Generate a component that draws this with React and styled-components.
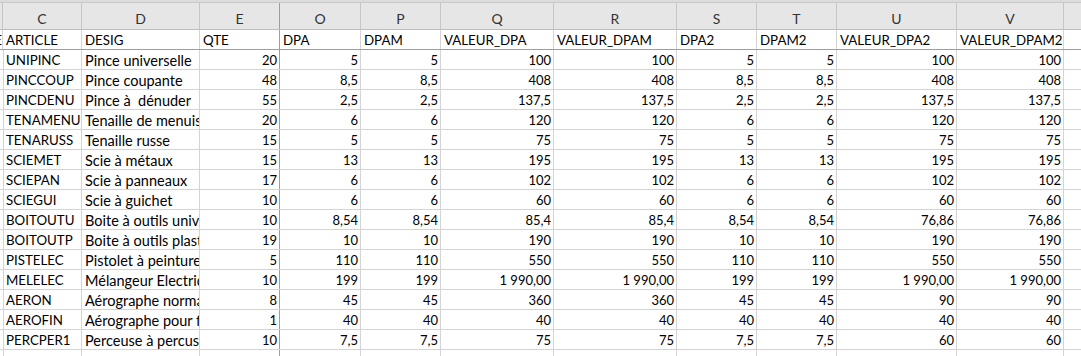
import React from "react";
import styled, { createGlobalStyle } from "styled-components";

const GlobalStyle = createGlobalStyle`
  html, body {
    margin: 0;
    padding: 0;
    background: #ffffff;
    overflow: hidden;
  }
`;

const COLS = [
  { letter: "", width: 3 },
  { letter: "C", width: 79 },
  { letter: "D", width: 118 },
  { letter: "E", width: 80, freeze: true },
  { letter: "O", width: 81 },
  { letter: "P", width: 80 },
  { letter: "Q", width: 113 },
  { letter: "R", width: 123 },
  { letter: "S", width: 80 },
  { letter: "T", width: 80 },
  { letter: "U", width: 120 },
  { letter: "V", width: 107 },
  { letter: "", width: 40 }
];

const HEAD = ["ARTICLE", "DESIG", "QTE", "DPA", "DPAM", "VALEUR_DPA", "VALEUR_DPAM", "DPA2", "DPAM2", "VALEUR_DPA2", "VALEUR_DPAM2"];

const ROWS = [
  ["UNIPINC", "Pince universelle", "20", "5", "5", "100", "100", "5", "5", "100", "100"],
  ["PINCCOUP", "Pince coupante", "48", "8,5", "8,5", "408", "408", "8,5", "8,5", "408", "408"],
  ["PINCDENU", "Pince à  dénuder", "55", "2,5", "2,5", "137,5", "137,5", "2,5", "2,5", "137,5", "137,5"],
  ["TENAMENU", "Tenaille de menuisier", "20", "6", "6", "120", "120", "6", "6", "120", "120"],
  ["TENARUSS", "Tenaille russe", "15", "5", "5", "75", "75", "5", "5", "75", "75"],
  ["SCIEMET", "Scie à métaux", "15", "13", "13", "195", "195", "13", "13", "195", "195"],
  ["SCIEPAN", "Scie à panneaux", "17", "6", "6", "102", "102", "6", "6", "102", "102"],
  ["SCIEGUI", "Scie à guichet", "10", "6", "6", "60", "60", "6", "6", "60", "60"],
  ["BOITOUTU", "Boite à outils universelle", "10", "8,54", "8,54", "85,4", "85,4", "8,54", "8,54", "76,86", "76,86"],
  ["BOITOUTP", "Boite à outils plastique", "19", "10", "10", "190", "190", "10", "10", "190", "190"],
  ["PISTELEC", "Pistolet à peinture électrique", "5", "110", "110", "550", "550", "110", "110", "550", "550"],
  ["MELELEC", "Mélangeur Electrique", "10", "199", "199", "1 990,00", "1 990,00", "199", "199", "1 990,00", "1 990,00"],
  ["AERON", "Aérographe normal", "8", "45", "45", "360", "360", "45", "45", "90", "90"],
  ["AEROFIN", "Aérographe pour finition", "1", "40", "40", "40", "40", "40", "40", "40", "40"],
  ["PERCPER1", "Perceuse à percussion", "10", "7,5", "7,5", "75", "75", "7,5", "7,5", "60", "60"]
];

const FONT = {
  caps: "font-size: 13.3px;",
  text: "font-size: 14.5px;",
  num: "font-size: 13px;"
};

const Sheet = styled.div`
  width: 1081px;
  height: 356px;
  overflow: hidden;
  font-family: Lato, "Liberation Sans", sans-serif;
  color: #000;
`;

const TopBand = styled.div`
  height: 2px;
  background: #dcdcdc;
  border-bottom: 1px solid #c8c8c8;
`;

const Row = styled.div`
  display: grid;
  grid-template-columns: ${COLS.map(c => c.width + "px").join(" ")};
  height: ${p => p.$h}px;
  box-sizing: border-box;
  border-bottom: 1px solid ${p => p.$line};
  background: ${p => p.$bg || "#fff"};
`;

const Letter = styled.div`
  box-sizing: border-box;
  border-right: 1px solid ${p => (p.$freeze ? "#9e9e9e" : "#c6c6c6")};
  display: flex;
  align-items: center;
  justify-content: center;
  padding-top: 5px;
  color: #333;
  font-size: 14px;
`;

const Cell = styled.div`
  box-sizing: border-box;
  border-right: 1px solid ${p => (p.$freeze ? "#9e9e9e" : "#d4d4d4")};
  display: flex;
  align-items: flex-end;
  justify-content: ${p => (p.$kind === "num" ? "flex-end" : "flex-start")};
  padding: ${p => (p.$kind === "num" ? "0 2px 0 2px" : "0 0 0 3px")};
  overflow: hidden;
  white-space: pre;
  line-height: 17px;
  ${p => FONT[p.$kind || "caps"]}
`;

const Tail = styled(Cell)`
  justify-content: flex-end;
  padding: 0;
`;

const kindOf = i => (i === 0 ? "caps" : i === 1 ? "text" : "num");

export default function App() {
  return (
    <Sheet>
      <GlobalStyle />
      <TopBand />
      <Row $h={27} $line="#bdbdbd" $bg="#e6e6e6">
        {COLS.map((c, i) => (
          <Letter key={i} $freeze={c.freeze}>{c.letter}</Letter>
        ))}
      </Row>
      <Row $h={20} $line="#9e9e9e">
        <Tail $kind="caps">E</Tail>
        {HEAD.map((h, i) => (
          <Cell key={i} $kind="caps" $freeze={COLS[i + 1].freeze}>{h}</Cell>
        ))}
        <Cell />
      </Row>
      {ROWS.map((r, ri) => (
        <Row key={ri} $h={20} $line="#d4d4d4">
          <Cell />
          {r.map((v, i) => (
            <Cell key={i} $kind={kindOf(i)} $freeze={COLS[i + 1].freeze}>{v}</Cell>
          ))}
          <Cell />
        </Row>
      ))}
      <Row $h={20} $line="#d4d4d4">
        {COLS.map((c, i) => (
          <Cell key={i} $freeze={c.freeze} />
        ))}
      </Row>
    </Sheet>
  );
}
